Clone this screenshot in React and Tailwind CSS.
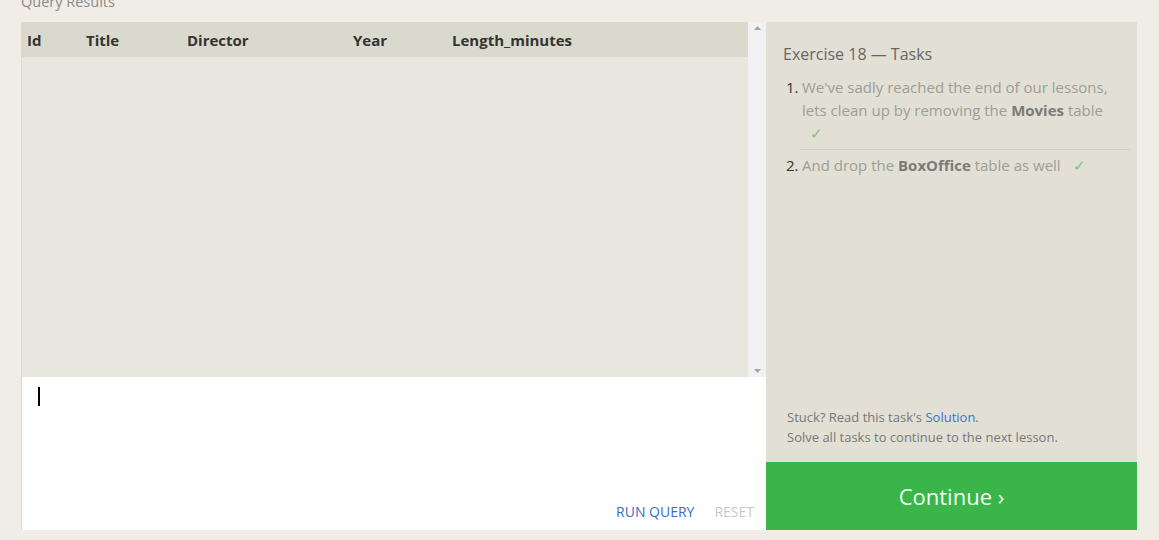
import React from 'react';

const columns = [
  { label: 'Id', width: 'w-[59px]' },
  { label: 'Title', width: 'w-[101px]' },
  { label: 'Director', width: 'w-[166px]' },
  { label: 'Year', width: 'w-[99px]' },
  { label: 'Length_minutes', width: 'flex-1' },
];

function Check() {
  return <span className="ml-[8px] text-[#7cc47f]">✓</span>;
}

export default function App() {
  return (
    <div
      className="min-h-[540px] overflow-hidden bg-[#efede6] px-[21px]"
      style={{ fontFamily: '"Open Sans", "Liberation Sans", sans-serif' }}
    >
      <p className="mt-[-8px] h-[30px] text-[14.5px] leading-[20px] text-[#8a8a8a]">Query Results</p>

      <div className="flex">
        {/* results + editor */}
        <div className="flex w-[745px] flex-col">
          <div className="flex h-[355px] border-l border-[#dcdad2]">
            <div className="flex-1 bg-[#e8e7df]">
              <div className="flex h-[35px] items-center bg-[#dad9ce] pl-[5px] pt-[1px] text-[15px] font-bold text-[#333]">
                {columns.map((c) => (
                  <div key={c.label} className={c.width}>
                    {c.label}
                  </div>
                ))}
              </div>
            </div>
            <div className="flex w-[18px] flex-col items-center justify-between bg-[#f1f1f1] py-[4px]">
              <svg width="7" height="4" viewBox="0 0 7 4">
                <path d="M0 4 L3.5 0 L7 4 Z" fill="#a3a3a3" />
              </svg>
              <svg width="7" height="4" viewBox="0 0 7 4">
                <path d="M0 0 L3.5 4 L7 0 Z" fill="#a3a3a3" />
              </svg>
            </div>
          </div>
          <div className="flex h-[153px] flex-col justify-between border-l border-[#dcdad2] bg-white pl-[16px] pb-[8px] pt-[10px]">
            <div className="h-[19px] w-[2px] bg-black" />
            <div className="flex justify-end gap-[20px] pr-[12px] text-[14px] leading-[20px]">
              <span className="text-[#3b6cc4]">RUN QUERY</span>
              <span className="text-[#c8c8c8]">RESET</span>
            </div>
          </div>
        </div>

        {/* tasks */}
        <div className="flex w-[371px] flex-col">
          <div className="flex h-[440px] flex-col justify-between bg-[#e2e0d5] pl-[17px] pr-[7px] pb-[15px] pt-[21px]">
            <div>
              <h2 className="text-[16px] leading-[22px] text-[#666]">Exercise 18 — Tasks</h2>
              <ol className="mt-[11px] text-[15px] leading-[23px] text-[#9d9d97]">
                <li className="flex pb-[4px] pl-[3px] pr-[10px]">
                  <span className="w-[16px] text-[#333]">1.</span>
                  <span className="flex-1">
                    We've sadly reached the end of our lessons, lets clean up by removing the{' '}
                    <b className="text-[#7a7a76]">Movies</b> table
                    <br />
                    <Check />
                  </span>
                </li>
                <li className="ml-[17px] border-t border-[#d2d0c6]" />
                <li className="flex pt-[4px] pl-[3px]">
                  <span className="w-[16px] text-[#333]">2.</span>
                  <span className="flex-1">
                    And drop the <b className="text-[#7a7a76]">BoxOffice</b> table as well <Check />
                  </span>
                </li>
              </ol>
            </div>
            <div className="pl-[4px] text-[13px] leading-[20px] text-[#777]">
              <p>
                Stuck? Read this task's <span className="text-[#3f6fcf]">Solution</span>.
              </p>
              <p>Solve all tasks to continue to the next lesson.</p>
            </div>
          </div>
          <div className="flex h-[68px] items-center justify-center bg-[#39b54a] text-[22px] text-[#f2fff2]">
            Continue ›
          </div>
        </div>
      </div>
    </div>
  );
}
